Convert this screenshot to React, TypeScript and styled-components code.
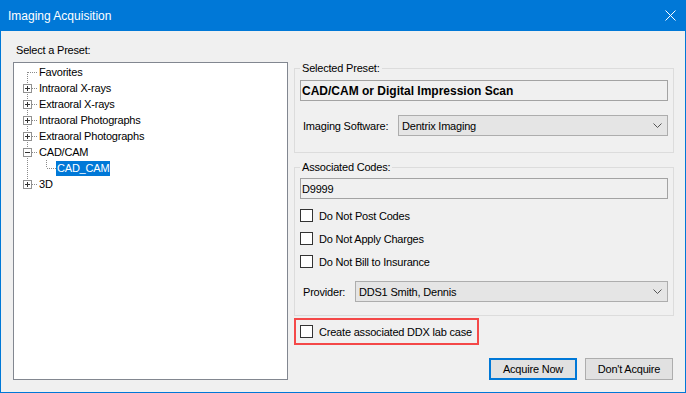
import React from 'react'
import styled, { createGlobalStyle } from 'styled-components'

const GlobalStyle = createGlobalStyle`
html, body {
  margin: 0;
  padding: 0;
  background: #f0f0f0;
}
body {
  font-family: "Liberation Sans", Arial, sans-serif;
  font-size: 11px;
  letter-spacing: -0.2px;
  color: #000;
}
`

type Node = {
  label: string
  level: number
  expander?: 'plus' | 'minus'
  selected?: boolean
}

const nodes: Node[] = [
  { label: 'Favorites', level: 0 },
  { label: 'Intraoral X-rays', level: 0, expander: 'plus' },
  { label: 'Extraoral X-rays', level: 0, expander: 'plus' },
  { label: 'Intraoral Photographs', level: 0, expander: 'plus' },
  { label: 'Extraoral Photographs', level: 0, expander: 'plus' },
  { label: 'CAD/CAM', level: 0, expander: 'minus' },
  { label: 'CAD_CAM', level: 1, selected: true },
  { label: '3D', level: 0, expander: 'plus' },
]

const Branch = ({ node, first, last }: { node: Node; first: boolean; last: boolean }) => {
  const w = 24 + node.level * 18
  const dot = { stroke: '#8a8a8a', strokeWidth: 1, strokeDasharray: '1 1' }
  return (
    <svg width={w} height={16} style={{ flex: 'none' }}>
      <line x1={13.5} y1={first ? 8 : 0} x2={13.5} y2={last ? 8 : 16} {...dot} />
      {node.level === 0 ? (
        <line x1={14} y1={8.5} x2={24} y2={8.5} {...dot} />
      ) : (
        <>
          <line x1={32.5} y1={0} x2={32.5} y2={8} {...dot} />
          <line x1={33} y1={8.5} x2={42} y2={8.5} {...dot} />
        </>
      )}
      {node.expander && (
        <>
          <rect x={9.5} y={4.5} width={8} height={8} fill="#fff" stroke="#919191" />
          <line x1={11} y1={8.5} x2={16} y2={8.5} stroke="#333" />
          {node.expander === 'plus' && <line x1={13.5} y1={6} x2={13.5} y2={11} stroke="#333" />}
        </>
      )}
    </svg>
  )
}

const Chevron = () => (
  <svg width="9" height="5" viewBox="0 0 9 5">
    <polyline points="0.5,0.5 4.5,4.5 8.5,0.5" fill="none" stroke="#555" strokeWidth="1" />
  </svg>
)

const App = () => {
  return (
    <>
      <GlobalStyle />
      <Window>
        <TitleBar>
          <span>Imaging Acquisition</span>
          <svg width="11" height="11" viewBox="0 0 11 11">
            <line x1="0.5" y1="0.5" x2="10.5" y2="10.5" stroke="#fff" />
            <line x1="10.5" y1="0.5" x2="0.5" y2="10.5" stroke="#fff" />
          </svg>
        </TitleBar>
        <Body>
          <LeftCol>
            <Caption>Select a Preset:</Caption>
            <Tree>
              {nodes.map((n, i) => (
                <TreeRow key={n.label}>
                  <Branch node={n} first={i === 0} last={i === nodes.length - 1} />
                  <NodeLabel selected={n.selected}>{n.label}</NodeLabel>
                </TreeRow>
              ))}
            </Tree>
          </LeftCol>
          <RightCol>
            <Group top={30}>
              <Legend>Selected Preset:</Legend>
              <ReadOnly top={5} bold>CAD/CAM or Digital Impression Scan</ReadOnly>
              <FieldRow top={14}>
                <FieldLabel>Imaging Software:</FieldLabel>
                <Combo width={270}>
                  <span>Dentrix Imaging</span>
                  <Chevron />
                </Combo>
              </FieldRow>
            </Group>
            <Group top={7} bottom={13}>
              <Legend>Associated Codes:</Legend>
              <ReadOnly top={4}>D9999</ReadOnly>
              <CheckRow top={10}>
                <Box />
                <span>Do Not Post Codes</span>
              </CheckRow>
              <CheckRow top={10}>
                <Box />
                <span>Do Not Apply Charges</span>
              </CheckRow>
              <CheckRow top={10}>
                <Box />
                <span>Do Not Bill to Insurance</span>
              </CheckRow>
              <FieldRow top={13}>
                <FieldLabel>Provider:</FieldLabel>
                <Combo width={313}>
                  <span>DDS1 Smith, Dennis</span>
                  <Chevron />
                </Combo>
              </FieldRow>
            </Group>
            <Callout>
              <Box />
              <span>Create associated DDX lab case</span>
            </Callout>
            <Buttons>
              <Button focused>Acquire Now</Button>
              <Button>Don't Acquire</Button>
            </Buttons>
          </RightCol>
        </Body>
      </Window>
    </>
  )
}

export default App

const Button = styled.button<{ focused?: boolean }>`
width: 88px;
height: 22px;
box-sizing: border-box;
padding: 0;
background: #e1e1e1;
border: ${p => (p.focused ? '2px solid #0078d7' : '1px solid #adadad')};
font-family: "Liberation Sans", Arial, sans-serif;
font-size: 11px;
letter-spacing: -0.2px;
color: #000;
`

const Buttons = styled.div`
display: flex;
justify-content: flex-end;
gap: 8px;
margin-top: 13px;
padding-right: 1px;
`

const Callout = styled.div`
width: 185px;
height: 27px;
box-sizing: border-box;
margin-top: 2px;
border: 2px solid #f44848;
padding-left: 4px;
display: flex;
align-items: center;
gap: 6px;
white-space: nowrap;
`

const Box = styled.div`
width: 13px;
height: 13px;
box-sizing: border-box;
border: 1px solid #333;
background: #fff;
flex: none;
`

const CheckRow = styled.div<{ top: number }>`
display: flex;
align-items: center;
gap: 6px;
height: 13px;
white-space: nowrap;
margin-top: ${p => p.top}px;
`

const Combo = styled.div<{ width: number }>`
width: ${p => p.width}px;
height: 21px;
box-sizing: border-box;
flex: none;
border: 1px solid #adadad;
background: #e5e5e5;
padding: 0 5px 0 3px;
display: flex;
align-items: center;
justify-content: space-between;
`

const FieldLabel = styled.div`
flex: 1;
padding-left: 3px;
`

const FieldRow = styled.div<{ top: number }>`
display: flex;
align-items: center;
margin-top: ${p => p.top}px;
`

const ReadOnly = styled.div<{ top: number; bold?: boolean }>`
height: 21px;
box-sizing: border-box;
margin-top: ${p => p.top}px;
border: 1px solid #a3a3a3;
background: #f0f0f0;
padding: 0 1px;
display: flex;
align-items: center;
font-weight: ${p => (p.bold ? 'bold' : 'normal')};
font-size: ${p => (p.bold ? 12 : 11)}px;
letter-spacing: ${p => (p.bold ? '0' : '-0.2px')};
`

const Legend = styled.legend`
padding: 0 2px;
line-height: 14px;
font-size: 11px;
`

const Group = styled.fieldset<{ top: number; bottom?: number }>`
margin: ${p => p.top}px 0 0 0;
padding: 0 5px ${p => p.bottom ?? 16}px 5px;
border: 1px solid #dcdcdc;
min-width: 0;
`

const RightCol = styled.div`
width: 380px;
margin-left: 6px;
display: flex;
flex-direction: column;
`

const NodeLabel = styled.span<{ selected?: boolean }>`
padding: 0 1px;
height: 15px;
line-height: 15px;
white-space: nowrap;
background: ${p => (p.selected ? '#0078d7' : 'transparent')};
color: ${p => (p.selected ? '#fff' : '#000')};
`

const TreeRow = styled.div`
display: flex;
align-items: center;
height: 16px;
`

const Tree = styled.div`
width: 275px;
height: 318px;
box-sizing: border-box;
margin-top: 5px;
border: 1px solid #828790;
background: #fff;
padding-top: 1px;
`

const Caption = styled.div`
margin-top: 12px;
padding-left: 3px;
line-height: 14px;
`

const LeftCol = styled.div`
width: 275px;
flex: none;
`

const Body = styled.div`
flex: 1;
display: flex;
padding: 0 11px 0 12px;
`

const TitleBar = styled.div`
height: 31px;
flex: none;
background: #0078d7;
color: #fff;
font-size: 12px;
letter-spacing: 0;
display: flex;
align-items: center;
justify-content: space-between;
padding: 0 9px 0 7px;
`

const Window = styled.div`
width: 686px;
height: 393px;
box-sizing: border-box;
border: 1px solid #0078d7;
border-top: none;
background: #f0f0f0;
display: flex;
flex-direction: column;
`
